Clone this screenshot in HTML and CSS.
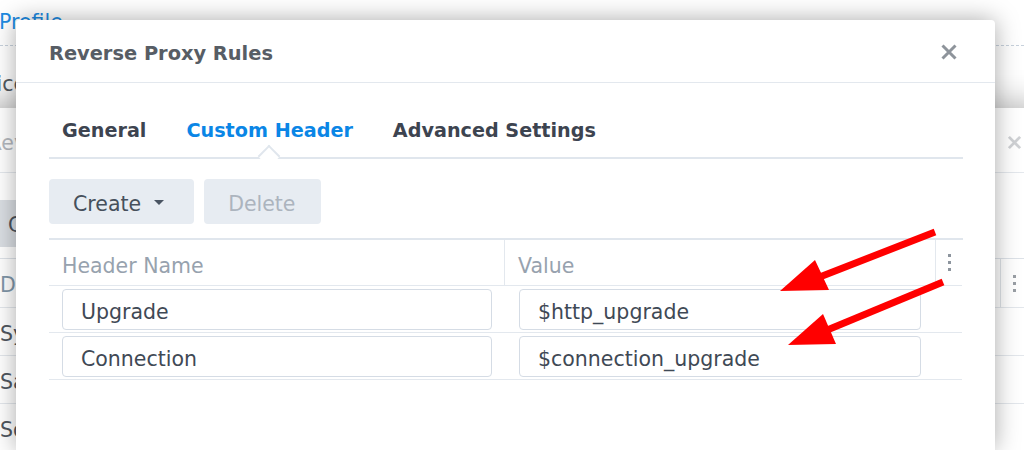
FILE: index.html
```
<!DOCTYPE html>
<html lang="en">
<head>
	<meta charset="UTF-8">
	<title>Reverse Proxy Rules</title>
	<link rel="stylesheet" href="styles.css">
</head>
<body>
	<!-- page behind the windows -->
	<div class="page">
		<div class="page-title">Profile</div>
		<div class="page-rule"></div>
		<div class="page-item">Device</div>
	</div>

	<!-- window under the dialog -->
	<div class="back-win">
		<div class="back-head">
			<span class="back-title">Reverse Proxy</span>
			<svg class="back-close" width="15" height="15" viewBox="0 0 16 16"><path d="M2 2L14 14M14 2L2 14" stroke="#cfd1d4" stroke-width="3"/></svg>
		</div>
		<div class="back-body">
			<div class="back-btn">Create</div>
			<div class="back-table">
				<div class="back-cell back-th">Description</div>
				<div class="back-cell back-kebab"><span class="kebab light"><i></i><i></i><i></i></span></div>
				<div class="back-cell">Synology</div><div class="back-cell"></div>
				<div class="back-cell">Sample</div><div class="back-cell"></div>
				<div class="back-cell">Sonarr</div><div class="back-cell"></div>
			</div>
		</div>
	</div>

	<!-- dialog -->
	<div class="modal">
		<div class="modal-head">
			<span class="modal-title">Reverse Proxy Rules</span>
			<svg class="close" width="16" height="16" viewBox="0 0 16 16"><path d="M1.5 1.5L14.5 14.5M14.5 1.5L1.5 14.5" stroke="#8e949b" stroke-width="3"/></svg>
		</div>
		<div class="modal-body">
			<div class="tabs">
				<span class="tab">General</span>
				<span class="tab active">Custom Header</span>
				<span class="tab">Advanced Settings</span>
			</div>
			<div class="toolbar">
				<div class="btn btn-menu">Create <span class="caret"></span></div>
				<div class="btn disabled">Delete</div>
			</div>
			<div class="grid">
				<div class="th">Header Name</div>
				<div class="th">Value</div>
				<div class="th th-menu"><span class="kebab"><i></i><i></i><i></i></span></div>

				<div class="td first"><div class="field">Upgrade</div></div>
				<div class="td second"><div class="field">$http_upgrade</div></div>
				<div class="td"></div>

				<div class="td first"><div class="field">Connection</div></div>
				<div class="td second"><div class="field">$connection_upgrade</div></div>
				<div class="td"></div>
			</div>
		</div>
	</div>

	<!-- annotation arrows on top -->
	<svg class="marks" width="1024" height="450" viewBox="0 0 1024 450">
		<line x1="935" y1="232" x2="812" y2="280" stroke="#ff0000" stroke-width="7" stroke-linecap="butt"/>
		<polygon points="780,291 815,260 829,290" fill="#ff0000"/>
		<line x1="943" y1="282" x2="820" y2="333" stroke="#ff0000" stroke-width="7" stroke-linecap="butt"/>
		<polygon points="788,345 823,314 836,344" fill="#ff0000"/>
	</svg>
</body>
</html>
```

FILE: styles.css
```
html, body {
	margin: 0;
	height: 100%;
}
body {
	position: relative;
	overflow: hidden;
	background: #fff;
	font-family: "DejaVu Sans", Verdana, sans-serif;
	color: #414b57;
}

/* background page */
.page {
	padding-top: 8px;
}
.page-title {
	margin-left: -1px;
	font-size: 20.5px;
	line-height: 28px;
	color: #1d8be2;
}
.page-rule {
	margin-top: 9px;
	border-top: 1px dashed #c7d1dc;
}
.page-item {
	margin: 26px 0 0 -44px;
	font-size: 20.5px;
	color: #555b62;
}

/* window under the dialog */
.back-win {
	position: absolute;
	left: -45px;
	top: 108px;
	width: 1100px;
	height: 400px;
	background: #fff;
	box-shadow: 0 -4px 30px rgba(0, 0, 0, 0.28);
}
.back-head {
	display: flex;
	align-items: center;
	justify-content: space-between;
	height: 64px;
	padding: 0 33px;
	border-bottom: 1px solid #e4e8ed;
}
.back-title {
	font-size: 20.5px;
	color: #b4b8be;
	padding-top: 6px;
}
.back-close {
	margin-top: 4px;
}
.back-body {
	padding: 27px 28px 0 33px;
}
.back-btn {
	display: inline-block;
	height: 47px;
	line-height: 50px;
	padding: 0 22px 0 20px;
	background: #dadee3;
	border-radius: 4px;
	font-size: 20.5px;
	color: #4a525c;
}
.back-table {
	display: grid;
	grid-template-columns: 1fr 27px;
	margin-top: 11px;
	border-top: 1px solid #dde2e8;
}
.back-cell {
	height: 47px;
	line-height: 52px;
	padding-left: 12px;
	border-bottom: 1px solid #e3e7ec;
	font-size: 20.5px;
	color: #50575f;
}
.back-th {
	height: 48px;
	color: #7f96a8;
}
.back-kebab {
	height: 48px;
	padding: 0;
	border-left: 1px solid #dfe3e8;
	display: flex;
	align-items: center;
	justify-content: center;
}

/* dialog */
.modal {
	position: absolute;
	left: 16px;
	top: 20px;
	width: 979px;
	height: 430px;
	background: #fff;
	border-radius: 3px 4px 0 0;
	box-shadow: 0 0 24px rgba(0, 0, 0, 0.34);
}
.modal-head {
	display: flex;
	align-items: center;
	justify-content: space-between;
	height: 62px;
	padding: 0 38px 0 33px;
	border-bottom: 1px solid #e3e8ee;
}
.modal-title {
	padding-top: 4px;
	font-size: 19.4px;
	font-weight: bold;
	color: #575d65;
}
.close {
	margin-top: 2px;
}
.modal-body {
	padding: 0 32px 0 33px;
}

.tabs {
	position: relative;
	display: flex;
	gap: 40px;
	padding: 36px 0 14px 13px;
	border-bottom: 2px solid #e0e6ed;
}
.tab {
	font-size: 19.2px;
	font-weight: bold;
	line-height: 24px;
	color: #3d4450;
}
.tab.active {
	position: relative;
	color: #0a86e6;
}
.tab.active::after {
	content: "";
	position: absolute;
	left: 50%;
	bottom: -21px;
	width: 14px;
	height: 14px;
	margin-left: -9px;
	background: #fff;
	border-left: 2px solid #e0e6ed;
	border-top: 2px solid #e0e6ed;
	transform: rotate(45deg);
}

.toolbar {
	display: flex;
	gap: 10px;
	margin-top: 20px;
}
.btn {
	display: flex;
	align-items: center;
	height: 45px;
	padding: 5px 26px 0 24px;
	box-sizing: border-box;
	background: #e7ecf2;
	border-radius: 4px;
	font-size: 20.5px;
	color: #46505c;
}
.btn-menu {
	padding-right: 30px;
}
.btn.disabled {
	color: #acb4be;
}
.caret {
	width: 0;
	height: 0;
	margin: -3px 0 0 13px;
	border-left: 5px solid transparent;
	border-right: 5px solid transparent;
	border-top: 5px solid #4a5563;
}

.grid {
	display: grid;
	grid-template-columns: 455px 431px 27px;
	margin-top: 14px;
	border-top: 2px solid #e0e6ed;
}
.th {
	height: 46px;
	padding: 6px 0 0 13px;
	box-sizing: border-box;
	display: flex;
	align-items: center;
	border-bottom: 1px solid #e3e8ee;
	font-size: 20.5px;
	color: #97a2ae;
}
.th + .th {
	border-left: 1px solid #e3e8ee;
}
.th-menu {
	padding: 0;
	justify-content: center;
}
.kebab {
	display: flex;
	flex-direction: column;
	gap: 4px;
}
.kebab i {
	display: block;
	width: 3px;
	height: 3px;
	background: #8d959e;
}
.kebab.light i {
	background: #9a9fa5;
}
.td {
	height: 47px;
	padding-top: 3px;
	box-sizing: border-box;
	border-bottom: 1px solid #e3e8ee;
}
.td.first {
	padding-left: 13px;
	padding-right: 12px;
}
.td.second {
	padding-left: 15px;
	padding-right: 14px;
}
.field {
	height: 41px;
	padding: 5px 0 0 18px;
	box-sizing: border-box;
	display: flex;
	align-items: center;
	border: 1px solid #d5dce5;
	border-radius: 4px;
	font-size: 20.5px;
	color: #3f4955;
}

.marks {
	position: absolute;
	left: 0;
	top: 0;
}
```
